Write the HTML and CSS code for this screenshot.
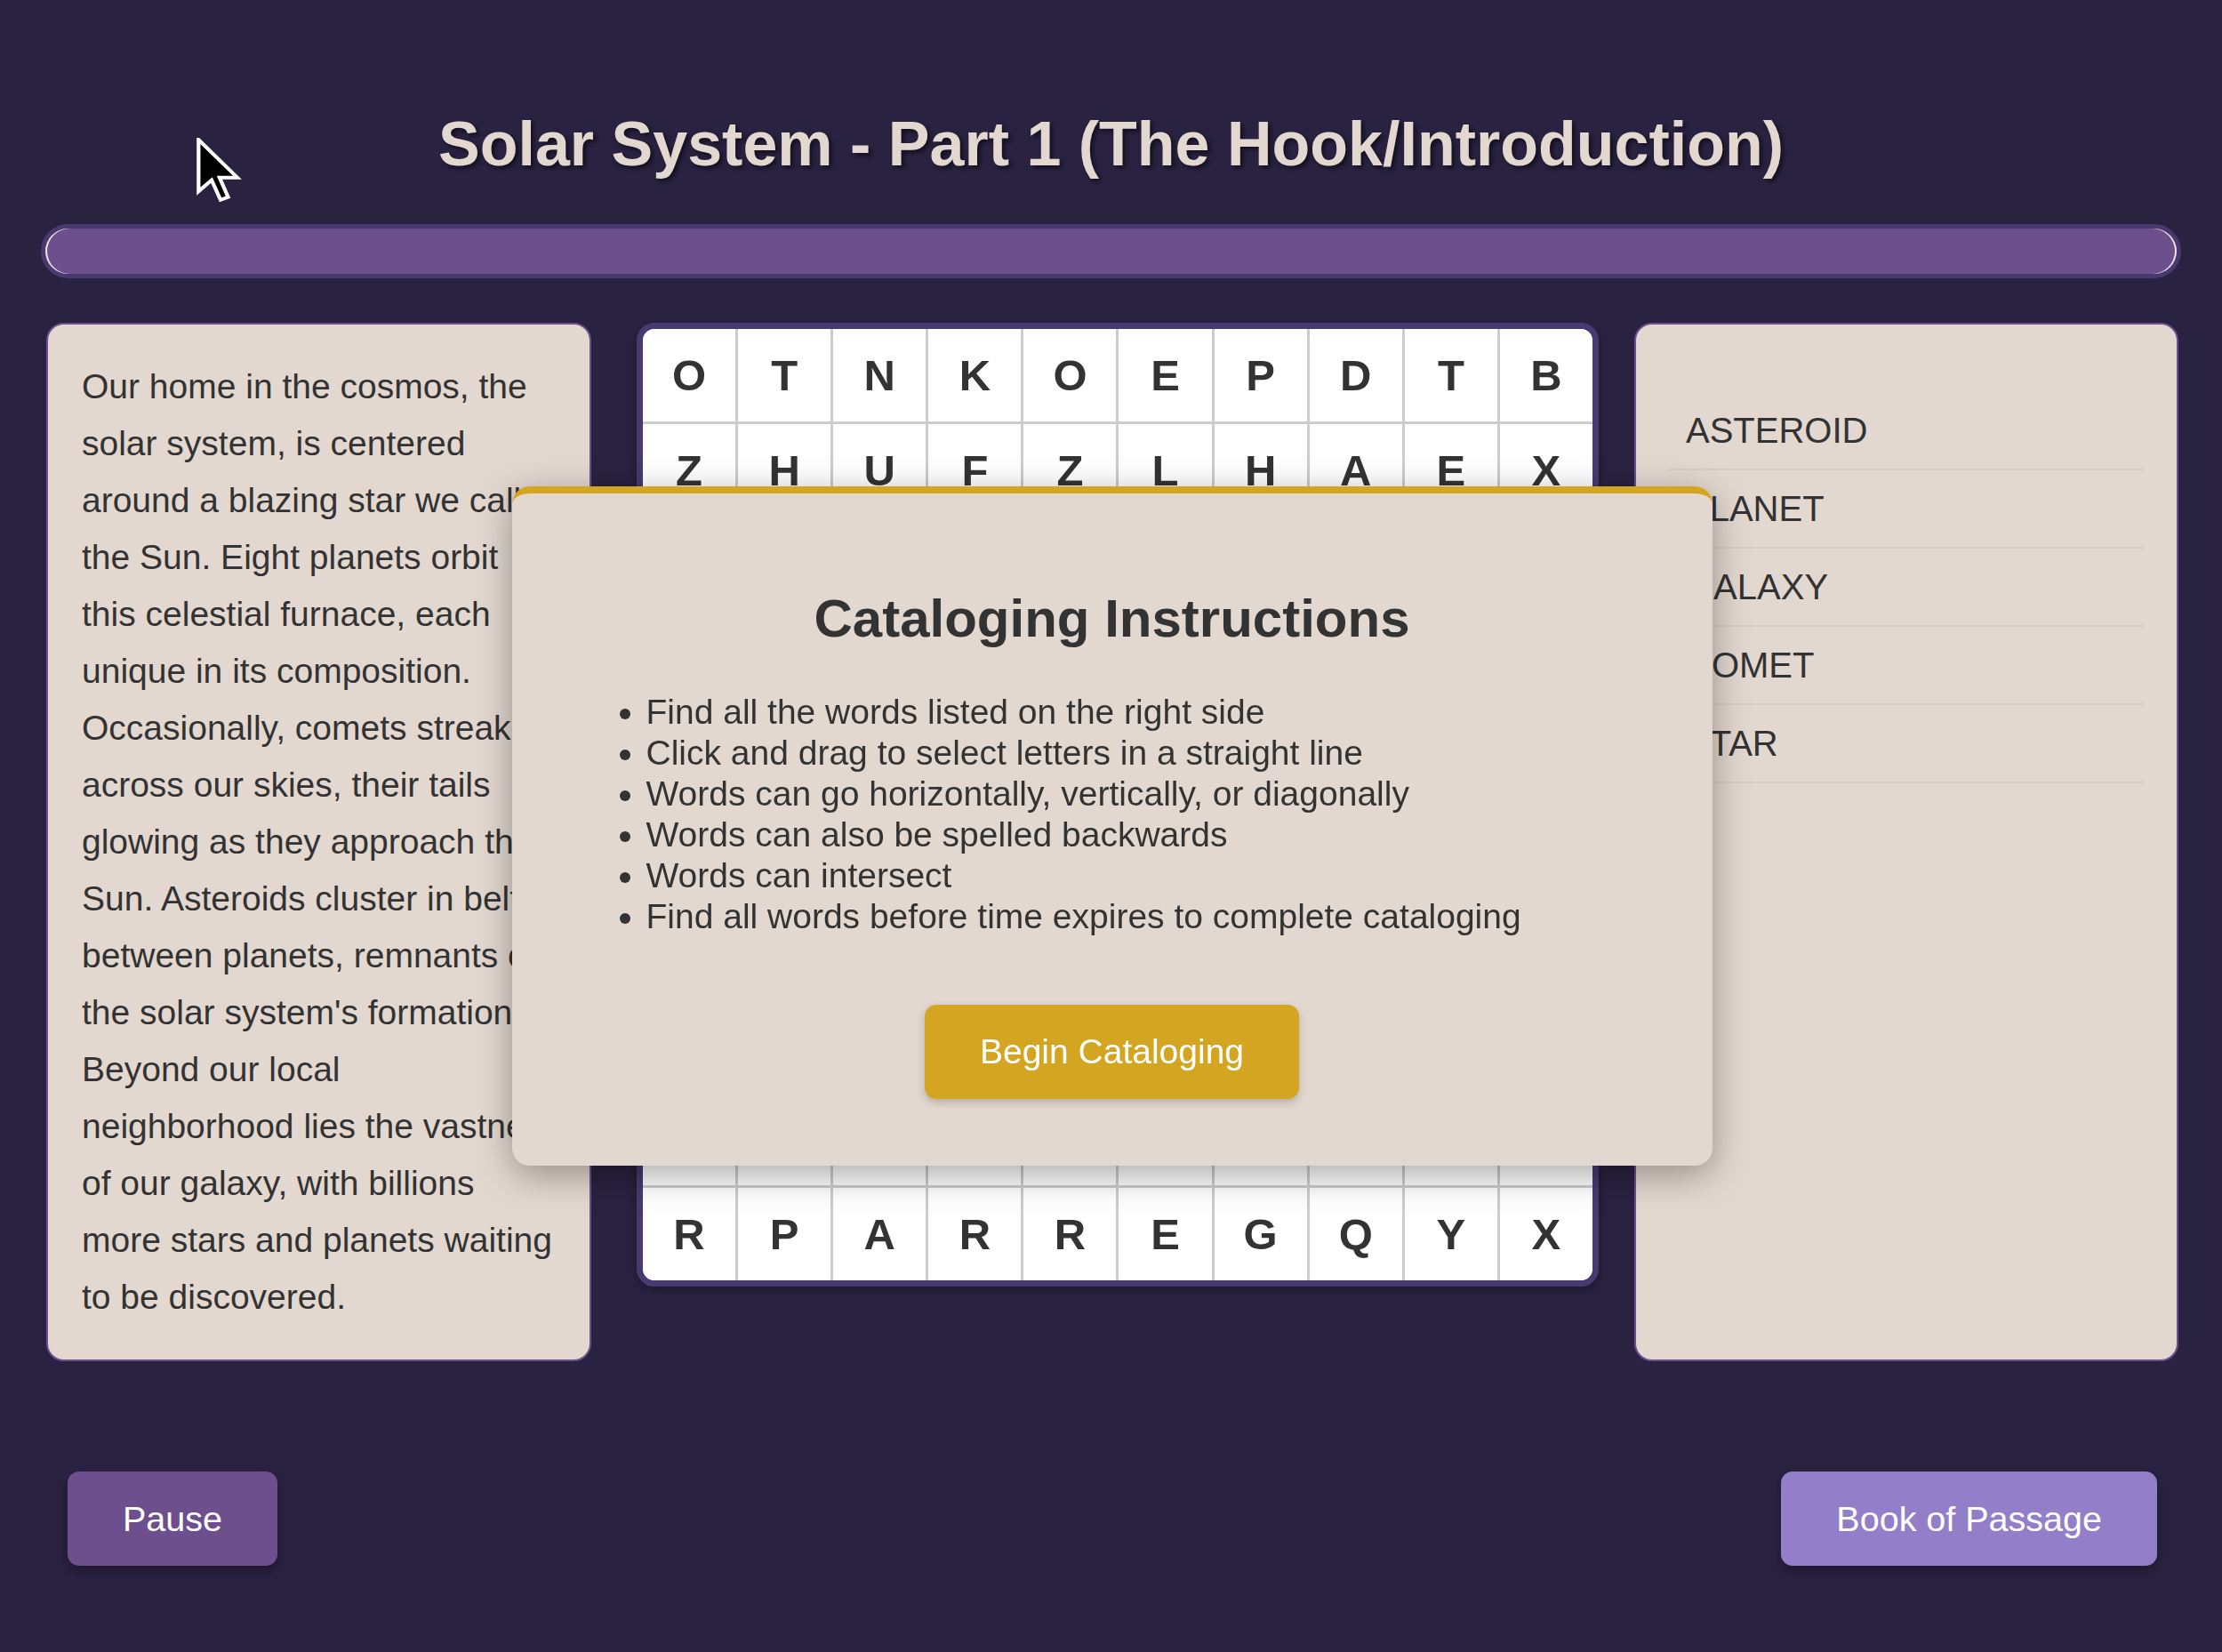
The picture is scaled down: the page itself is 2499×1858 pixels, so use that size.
FILE: index.html
```html
<!DOCTYPE html>
<html lang="en">
<head>
<meta charset="utf-8">
<title>Solar System - Part 1</title>
<link rel="stylesheet" href="styles.css">
</head>
<body>
<div class="app">
  <h1 class="title">Solar System - Part 1 (The Hook/Introduction)</h1>
  <div class="progress"><div class="progress-fill"></div></div>

  <div class="main">
    <div class="panel passage">
      <p>Our home in the cosmos, the solar system, is centered around a blazing star we call the Sun. Eight planets orbit this celestial furnace, each unique in its composition. Occasionally, comets streak across our skies, their tails glowing as they approach the Sun. Asteroids cluster in belts between planets, remnants of the solar system's formation. Beyond our local neighborhood lies the vastness of our galaxy, with billions more stars and planets waiting to be discovered.</p>
    </div>

    <div class="grid">
      <div class="cell">O</div><div class="cell">T</div><div class="cell">N</div><div class="cell">K</div><div class="cell">O</div><div class="cell">E</div><div class="cell">P</div><div class="cell">D</div><div class="cell">T</div><div class="cell">B</div>
      <div class="cell">Z</div><div class="cell">H</div><div class="cell">U</div><div class="cell">F</div><div class="cell">Z</div><div class="cell">L</div><div class="cell">H</div><div class="cell">A</div><div class="cell">E</div><div class="cell">X</div>
      <div class="cell">A</div><div class="cell">S</div><div class="cell">T</div><div class="cell">E</div><div class="cell">R</div><div class="cell">O</div><div class="cell">I</div><div class="cell">D</div><div class="cell">M</div><div class="cell">Q</div>
      <div class="cell">W</div><div class="cell">P</div><div class="cell">L</div><div class="cell">A</div><div class="cell">N</div><div class="cell">E</div><div class="cell">T</div><div class="cell">V</div><div class="cell">C</div><div class="cell">J</div>
      <div class="cell">G</div><div class="cell">A</div><div class="cell">L</div><div class="cell">A</div><div class="cell">X</div><div class="cell">Y</div><div class="cell">K</div><div class="cell">O</div><div class="cell">B</div><div class="cell">U</div>
      <div class="cell">N</div><div class="cell">C</div><div class="cell">O</div><div class="cell">M</div><div class="cell">E</div><div class="cell">T</div><div class="cell">F</div><div class="cell">M</div><div class="cell">I</div><div class="cell">S</div>
      <div class="cell">Y</div><div class="cell">V</div><div class="cell">S</div><div class="cell">T</div><div class="cell">A</div><div class="cell">R</div><div class="cell">W</div><div class="cell">E</div><div class="cell">T</div><div class="cell">L</div>
      <div class="cell">H</div><div class="cell">J</div><div class="cell">D</div><div class="cell">Q</div><div class="cell">B</div><div class="cell">I</div><div class="cell">C</div><div class="cell">Z</div><div class="cell">U</div><div class="cell">N</div>
      <div class="cell">K</div><div class="cell">M</div><div class="cell">F</div><div class="cell">O</div><div class="cell">L</div><div class="cell">G</div><div class="cell">S</div><div class="cell">D</div><div class="cell">W</div><div class="cell">P</div>
      <div class="cell">R</div><div class="cell">P</div><div class="cell">A</div><div class="cell">R</div><div class="cell">R</div><div class="cell">E</div><div class="cell">G</div><div class="cell">Q</div><div class="cell">Y</div><div class="cell">X</div>
    </div>

    <div class="panel words">
      <ul class="word-list">
        <li>ASTEROID</li>
        <li>PLANET</li>
        <li>GALAXY</li>
        <li>COMET</li>
        <li>STAR</li>
      </ul>
    </div>
  </div>

  <div class="actions">
    <button class="btn btn-pause">Pause</button>
    <button class="btn btn-book">Book of Passage</button>
  </div>
</div>

<div class="modal">
  <h2 class="modal-title">Cataloging Instructions</h2>
  <ul class="modal-list">
    <li>Find all the words listed on the right side</li>
    <li>Click and drag to select letters in a straight line</li>
    <li>Words can go horizontally, vertically, or diagonally</li>
    <li>Words can also be spelled backwards</li>
    <li>Words can intersect</li>
    <li>Find all words before time expires to complete cataloging</li>
  </ul>
  <div class="modal-actions">
    <button class="btn btn-begin">Begin Cataloging</button>
  </div>
</div>

<svg class="cursor" width="51" height="74" viewBox="-0.6 -0.6 13.2 21" preserveAspectRatio="none" aria-hidden="true">
  <path d="M0 0 L0 16.5 L3.8 12.9 L6.4 19.2 L8.6 18.3 L6.1 12.1 L11.3 12.1 Z" fill="#000" stroke="#fff" stroke-width="1.1" stroke-linejoin="miter"/>
</svg>
</body>
</html>
```

FILE: styles.css
```css
html, body {
  margin: 0;
  padding: 0;
}

body {
  background: #292241;
  font-family: "Liberation Sans", Arial, sans-serif;
  color: #333;
  min-height: 1858px;
  overflow: hidden;
}

.app {
  padding: 121px 46px 0;
}

.title {
  margin: 0;
  text-align: center;
  font-size: 70px;
  line-height: 83px;
  font-weight: bold;
  color: #e3d8d0;
  text-shadow: 3px 3px 5px rgba(0, 0, 0, 0.55);
}

.progress {
  margin-top: 48px;
  height: 61px;
  box-sizing: border-box;
  border: 5px solid #483a70;
  border-radius: 31px;
  background: #483a70;
}

.progress-fill {
  height: 100%;
  width: 100%;
  border-radius: 26px;
  background: #6d4f8d;
  box-shadow: inset 2px 0 0 #efe6e0, inset -2px 0 0 #efe6e0;
}

.main {
  margin: 50px 3px 0 6px;
  display: flex;
  align-items: stretch;
}

.panel {
  background: #e3d8d0;
  border: 2px solid #6d4f8d;
  border-radius: 20px;
  box-sizing: border-box;
}

.passage {
  width: 613px;
  flex: 0 0 613px;
  padding: 38px 32px 38px 38px;
}

.passage p {
  margin: 0;
  font-size: 39px;
  line-height: 64px;
}

.grid {
  flex: 0 0 1082px;
  width: 1082px;
  margin-left: 51px;
  align-self: flex-start;
  box-sizing: border-box;
  border: 7px solid #483a70;
  border-radius: 20px;
  overflow: hidden;
  background: #cccccc;
  display: grid;
  grid-template-columns: repeat(10, 1fr);
  gap: 3px;
  box-shadow: 0 4px 8px rgba(0, 0, 0, 0.3);
}

.cell {
  background: #fff;
  height: 104.3px;
  display: flex;
  align-items: center;
  justify-content: center;
  font-size: 49px;
  font-weight: bold;
  color: #333;
}

.words {
  flex: 0 0 612px;
  width: 612px;
  margin-left: 40px;
  padding: 38px 36px;
}

.word-list {
  list-style: none;
  margin: 38px 0 0;
  padding: 0;
}

.word-list li {
  font-size: 40px;
  line-height: 46px;
  padding: 20px;
  border-bottom: 2px solid #d6ccbf;
}

.actions {
  margin: 124px 27px 0 30px;
  display: flex;
  justify-content: space-between;
}

.btn {
  font-family: "Liberation Sans", Arial, sans-serif;
  font-size: 39.5px;
  line-height: 44px;
  border: none;
  border-radius: 13px;
  color: #fff;
  box-shadow: 0 6px 12px rgba(0, 0, 0, 0.3);
}

.btn-pause {
  background: #6d4f8d;
  padding: 31px 62px;
}

.btn-book {
  background: #937fc9;
  padding: 31px 62px;
}

.modal {
  position: fixed;
  left: 50%;
  top: 50%;
  transform: translate(-50%, -50%);
  margin-left: 1px;
  width: 1350px;
  box-sizing: border-box;
  background: #e3d8d0;
  border-top: 8px solid #d4a520;
  border-radius: 20px;
  padding: 106px 77px 75px;
  box-shadow: 0 10px 40px rgba(0, 0, 0, 0.35);
}

.modal-title {
  margin: 0;
  text-align: center;
  font-size: 60px;
  line-height: 69px;
  font-weight: bold;
  color: #333;
}

.modal-list {
  margin: 48px 0 76px;
  padding-left: 74px;
  font-size: 39px;
  line-height: 46px;
}

.modal-actions {
  text-align: center;
}

.btn-begin {
  background: #d4a520;
  font-size: 39px;
  padding: 31px 62px;
  box-shadow: 0 4px 10px rgba(0, 0, 0, 0.2);
}

.cursor {
  position: fixed;
  left: 221px;
  top: 155px;
}
```
